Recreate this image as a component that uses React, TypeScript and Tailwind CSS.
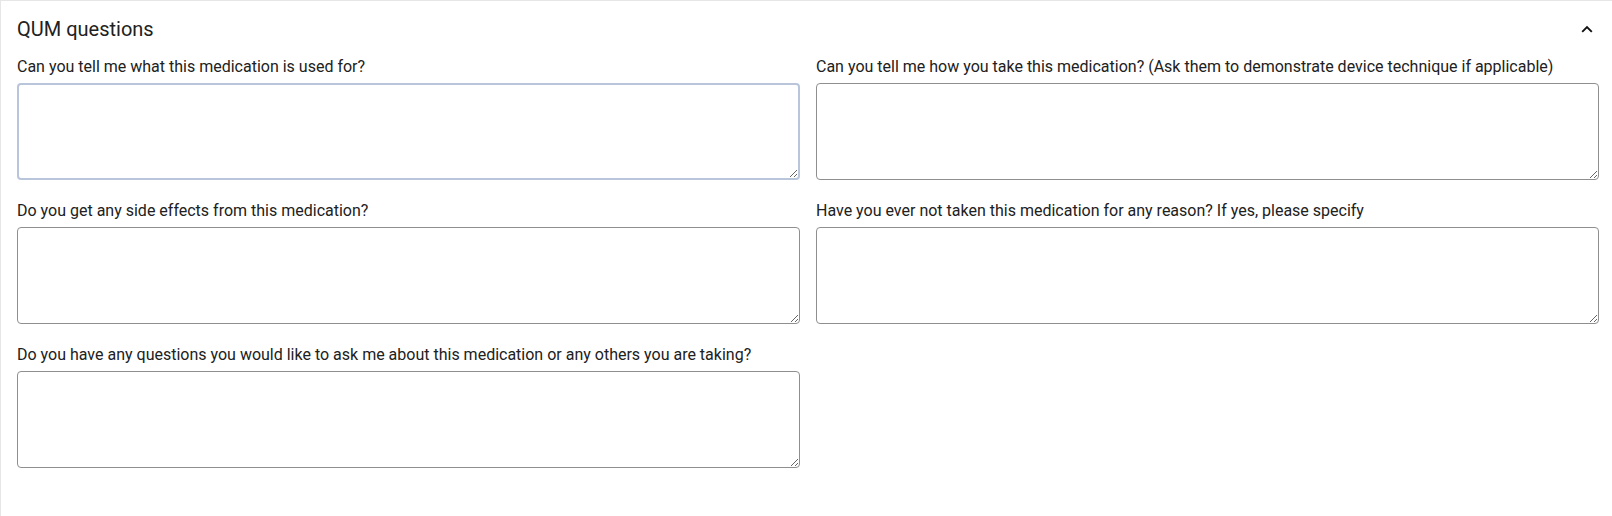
import { useState } from 'react'

const questions = [
  'Can you tell me what this medication is used for?',
  'Can you tell me how you take this medication? (Ask them to demonstrate device technique if applicable)',
  'Do you get any side effects from this medication?',
  'Have you ever not taken this medication for any reason? If yes, please specify',
  'Do you have any questions you would like to ask me about this medication or any others you are taking?',
]

export default function App() {
  const [open, setOpen] = useState(true)
  const [answers, setAnswers] = useState<string[]>(questions.map(() => ''))

  return (
    <div className="min-h-[516px] bg-white font-['Roboto','Liberation_Sans',sans-serif] text-[#212121]">
      <section className="border-l border-t border-[#e6e6e6] min-h-[516px] pl-4 pr-[13px] pt-[14px]">
        <header className="flex items-center justify-between h-7">
          <h2 className="text-[20px] leading-7">QUM questions</h2>
          <button
            onClick={() => { setOpen(prev => !prev) }}
            className="w-6 h-6 flex items-center justify-center"
          >
            <svg width="12" height="8" viewBox="0 0 12 8" fill="none">
              <path d="M1.2 6.8 L6 2 L10.8 6.8" stroke="#111" strokeWidth="1.9" />
            </svg>
          </button>
        </header>

        {open && (
          <div className="grid grid-cols-2 gap-x-4 gap-y-[19px] mt-3">
            {questions.map((q, i) => (
              <label key={q} className="flex flex-col">
                <span className="text-[16px] leading-6 mb-[4px]">{q}</span>
                <textarea
                  value={answers[i]}
                  onChange={e => {
                    const next = [...answers]
                    next[i] = e.target.value
                    setAnswers(next)
                  }}
                  className={
                    i === 0
                      ? 'h-[97px] rounded-[4px] border-2 border-[#b9c5db] outline-none px-2 py-1 text-sm'
                      : 'h-[97px] rounded-[4px] border border-[#8f8f8f] outline-none px-2 py-1 text-sm'
                  }
                />
              </label>
            ))}
          </div>
        )}
      </section>
    </div>
  )
}
